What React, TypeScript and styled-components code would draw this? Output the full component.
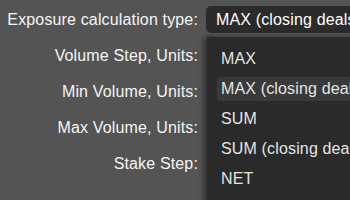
import React from "react";
import styled, { createGlobalStyle } from "styled-components";

const GlobalStyle = createGlobalStyle`
  html {
    overflow: hidden;
  }
  body {
    margin: 0;
    min-height: 100vh;
    background: #545454;
    font-family: "Liberation Sans", Arial, sans-serif;
    font-size: 16px;
    letter-spacing: 0.15px;
  }
`;

const Form = styled.div`
  position: relative;
  display: grid;
  grid-template-columns: 198px 1fr;
  grid-auto-rows: 27px;
  column-gap: 8px;
  row-gap: 9px;
  padding-top: 6px;
  width: 400px;
`;

const Label = styled.label`
  display: flex;
  align-items: center;
  justify-content: flex-end;
  color: #f4f4f4;
  white-space: nowrap;
`;

const Select = styled.div`
  display: flex;
  align-items: center;
  padding-left: 10px;
  background: #2b2b2b;
  border-radius: 5px;
  color: #ffffff;
  white-space: nowrap;
`;

const Field = styled.div``;

const Menu = styled.ul`
  position: absolute;
  top: 37px;
  left: 207px;
  width: 220px;
  height: 200px;
  margin: 0;
  padding: 10px 0 0 10px;
  list-style: none;
  background: #2a2a2a;
  box-shadow: -3px 0 6px rgba(0, 0, 0, 0.45);
  box-sizing: border-box;
`;

const Option = styled.li<{ $active?: boolean }>`
  display: flex;
  align-items: center;
  height: 24px;
  margin-bottom: 6px;
  padding-left: 4px;
  border-radius: 4px;
  color: #e4e4e4;
  white-space: nowrap;
  background: ${(p) => (p.$active ? "#3a3a3a" : "transparent")};
`;

const labels = [
  "Volume Step, Units:",
  "Min Volume, Units:",
  "Max Volume, Units:",
  "Stake Step:",
];

const options = ["MAX", "MAX (closing deals)", "SUM", "SUM (closing deals)", "NET"];

export default function App() {
  return (
    <>
      <GlobalStyle />
      <Form>
        <Label>Exposure calculation type:</Label>
        <Select>MAX (closing deals)</Select>
        {labels.map((l) => (
          <React.Fragment key={l}>
            <Label>{l}</Label>
            <Field />
          </React.Fragment>
        ))}
        <Menu>
          {options.map((o, i) => (
            <Option key={o} $active={i === 1}>
              {o}
            </Option>
          ))}
        </Menu>
      </Form>
    </>
  );
}
